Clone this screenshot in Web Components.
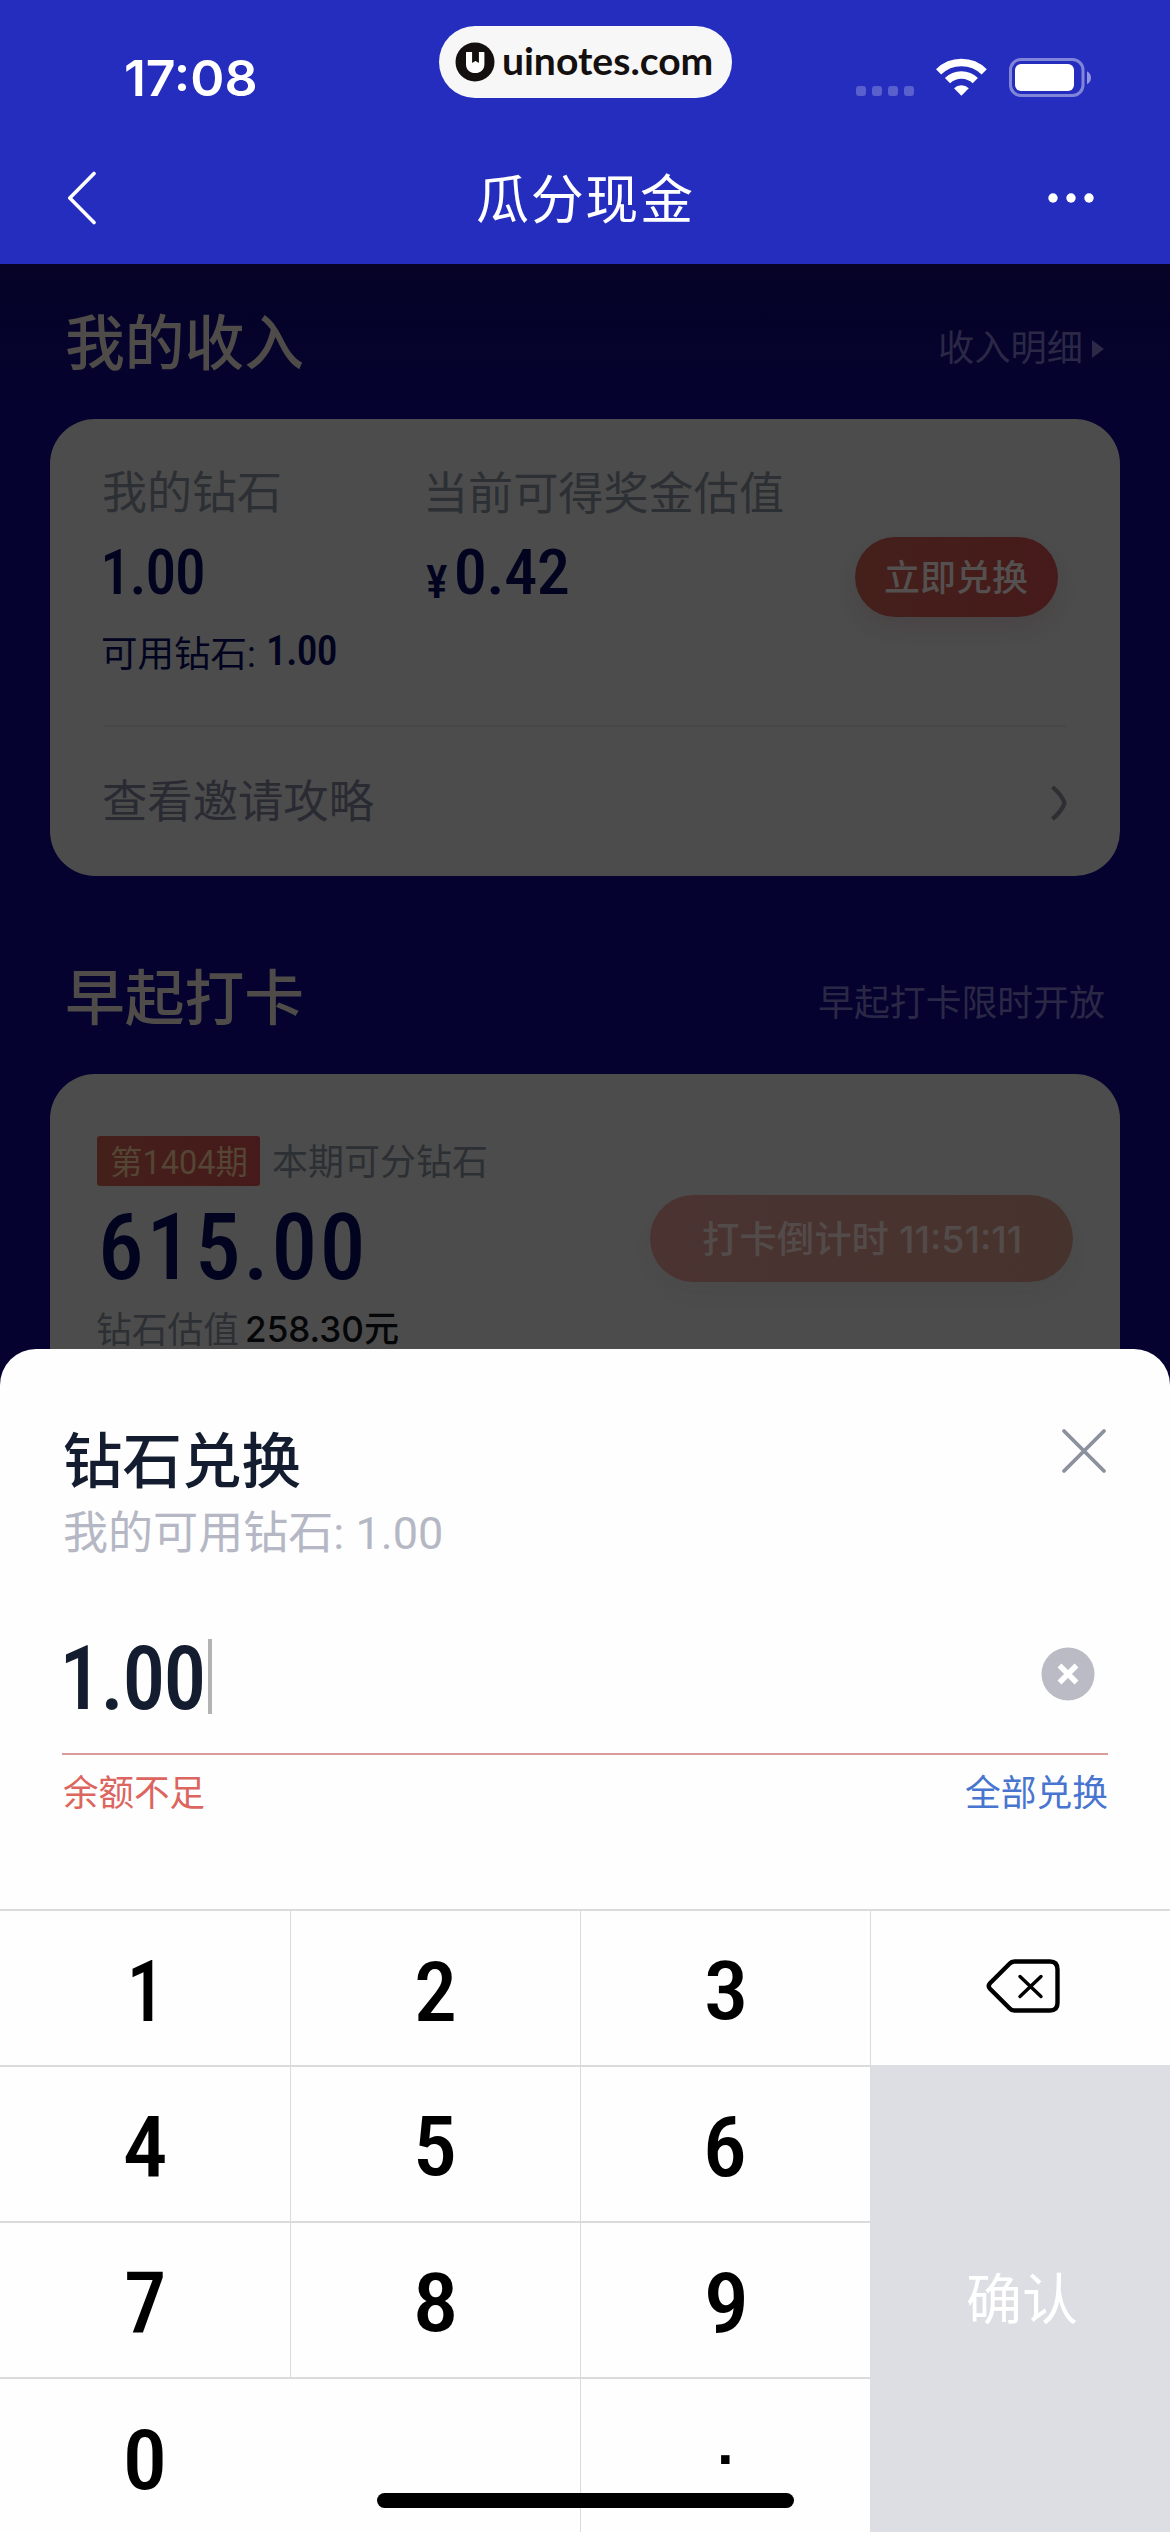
<!DOCTYPE html>
<html lang="zh-CN">
<head>
<meta charset="utf-8">
<title>瓜分现金</title>
<style>
html,body{margin:0;padding:0;background:#050230}
body{width:1170px;height:2532px;overflow:hidden;font-family:"Noto Sans CJK SC",sans-serif}
</style>
</head>
<body>
<cash-page></cash-page>
<script>
const FONTS = {
  cjk: '"Noto Sans CJK SC", sans-serif',
  mix: 'Roboto, "Noto Sans CJK SC", sans-serif',
  sf: 'Inter, "Noto Sans CJK SC", sans-serif',
  din: '"Roboto Condensed", Roboto, sans-serif',
  arial: '"Liberation Sans", sans-serif',
  logo: 'Lato, sans-serif'
};
const pen = document.createElement('canvas').getContext('2d');

/* A line of text whose box is its inked area: w and h are the ink size in px. */
class InkText extends HTMLElement {
  connectedCallback() {
    const n = (k, d) => this.hasAttribute(k) ? parseFloat(this.getAttribute(k)) : d;
    const text = this.getAttribute('t');
    const w = n('w'), h = n('h'), weight = n('weight', 400), ls = n('ls', 0);
    const family = FONTS[this.getAttribute('face') || 'cjk'];
    const measure = s => {
      pen.font = `${weight} ${s}px ${family}`;
      pen.letterSpacing = (ls * s) + 'px';
      return pen.measureText(text);
    };
    let size = n('size', 0);
    if (!size) {
      const m = measure(100);
      size = h * 100 / (m.actualBoundingBoxAscent + m.actualBoundingBoxDescent);
    }
    const m = measure(size);
    const up = m.actualBoundingBoxAscent, down = m.actualBoundingBoxDescent;
    const A = Math.round(m.fontBoundingBoxAscent), D = Math.round(m.fontBoundingBoxDescent);
    const base = (h - A - D) / 2 + A;
    const sx = w / (m.actualBoundingBoxLeft + m.actualBoundingBoxRight);
    const dy = (h - up - down) / 2 + up - base;
    const dx = m.actualBoundingBoxLeft * sx;
    const root = this.attachShadow({mode: 'open'});
    root.innerHTML = `<style>
      :host{display:block;flex:none;width:${w}px;height:${h}px}
      span{display:block;width:max-content;white-space:pre;font:${weight} ${size}px/${h}px ${family.replace(/"/g, "'")};
        letter-spacing:${ls}em;transform-origin:0 0;transform:translate(${dx}px,${dy}px) scaleX(${sx})}
    </style><span></span>`;
    root.querySelector('span').textContent = text;
  }
}
customElements.define('ink-text', InkText);

function component(name, html) {
  const tpl = document.createElement('template');
  tpl.innerHTML = html;
  customElements.define(name, class extends HTMLElement {
    constructor() {
      super();
      this.attachShadow({mode: 'open'}).appendChild(tpl.content.cloneNode(true));
    }
  });
}

component('status-bar', `
<style>
:host{display:flex;height:134px;align-items:flex-start;color:#fff}
.pill{display:flex;width:293px;height:72px;margin:26px 0 0 183px;border-radius:36px;background:#f7f7f7;color:#14100f}
svg{display:block;flex:none}
</style>
<ink-text t="17:08" face="sf" weight="600" w="130" h="37" style="margin:60px 0 0 126px"></ink-text>
<div class="pill">
  <svg width="40" height="40" viewBox="0 0 40 40" style="margin:16px 0 0 16px"><circle cx="20" cy="20" r="19.5" fill="#14100f"/><path fill="#fff" d="M11.3 10h6v10.8l3.2-2 3.2 2V10h2.5v0h2.2c.7 0 1 .4 1 1v11.5c0 5-4 8.6-9.2 8.6s-9.2-3.600-9.200-8.600V11c0-.6.3-1 .3-1z"/><path fill="#14100f" d="M17.300 10h6.400v10.800l-3.200-2-3.200 2z"/></svg>
  <ink-text t="uinotes.com" face="logo" weight="700" w="208" h="28" style="margin:21px 0 0 9px"></ink-text>
</div>
<svg width="240" height="42" viewBox="0 0 240 42" style="margin:57px 0 0 122px">
  <g fill="#fff" fill-opacity=".24"><rect x="2" y="29" width="10" height="10" rx="3"/><rect x="18" y="29" width="10" height="10" rx="3"/><rect x="34" y="29" width="10" height="10" rx="3"/><rect x="50" y="29" width="10" height="10" rx="3"/></g>
  <g fill="none" stroke="#fff" stroke-width="7.400"><path d="M84.600 14.800a32.500 32.500 0 0 1 45.600 0"/><path d="M93.500 23.700a19.800 19.800 0 0 1 27.800 0"/></g>
  <path fill="#fff" d="M107.400 38.800l-7.400-7.600a10.700 10.700 0 0 1 14.800 0z"/>
  <rect x="156.500" y="2.500" width="72.500" height="36" rx="10.500" fill="none" stroke="#fff" stroke-opacity=".42" stroke-width="3"/>
  <rect x="161" y="7" width="59" height="27" rx="6" fill="#fff"/>
  <path d="M233 14.300c5.300 2.400 5.300 10.600 0 13z" fill="#fff" fill-opacity=".5"/>
</svg>`);

component('nav-bar', `
<style>
:host{display:flex;height:130px;color:#fff}
svg{display:block;flex:none}
</style>
<svg width="30" height="56" viewBox="0 0 30 56" style="margin:36px 0 0 66px"><path d="M28 3.500L3.800 28 28 52.500" fill="none" stroke="#fff" stroke-width="3.600" stroke-linejoin="round" stroke-linecap="round"/></svg>
<ink-text t="瓜分现金" size="53" ls=".03" w="215" h="50" style="margin:39px 0 0 381px"></ink-text>
<svg width="50" height="12" viewBox="0 0 50 12" style="margin:58px 0 0 354px"><g fill="#fff"><circle cx="7" cy="6" r="4.700"/><circle cx="25" cy="6" r="4.700"/><circle cx="43" cy="6" r="4.700"/></g></svg>`);

component('section-head', `
<style>
:host{display:flex;justify-content:space-between;align-items:flex-start;box-sizing:border-box;padding:0 66px 0 67px;color:#4e4b49}
::slotted([slot=more]){color:#2b2846}
</style>
<slot></slot><slot name="more"></slot>`);

component('panel-card', `
<style>
:host{display:flow-root;width:1070px;margin:0 50px;box-sizing:border-box;background:#4c4c4c;border-radius:45px;color:#2c2f33}
</style><slot></slot>`);

component('pill-button', `
<style>
:host{display:flex;justify-content:center;align-items:center;box-sizing:border-box;border-radius:50px;color:#545050;
background:linear-gradient(90deg,#44201b,#461a1a);box-shadow:0 12px 18px rgba(70,40,45,.16)}
:host([off]){background:linear-gradient(90deg,#4a3331,#47332e);color:#534b49;box-shadow:0 12px 18px rgba(70,55,55,.06)}
</style><slot></slot>`);

component('income-card', `
<style>
:host{display:block}
panel-card{height:457px}
.row{display:flex;align-items:flex-start}
.navy{color:#01031f}
hr{border:0;height:2px;background:#474747;margin:55px 54px 0 53px}
svg{display:block}
</style>
<panel-card>
  <div class="row" style="padding:52px 0 0 53px">
    <ink-text t="我的钻石" size="45" w="177" h="42"></ink-text>
    <ink-text t="当前可得奖金估值" size="45" w="355" h="42" style="margin-left:148px"></ink-text>
  </div>
  <div class="row navy" style="padding:24px 0 0 54px;height:97px">
    <ink-text t="1.00" face="din" weight="500" ls="-.02" w="99" h="47" style="margin-top:11px"></ink-text>
    <ink-text t="¥" face="din" weight="500" w="21" h="33" style="margin:28px 0 0 223px"></ink-text>
    <ink-text t="0.42" face="din" weight="500" ls="-.01" w="111" h="47" style="margin:11px 0 0 10px"></ink-text>
    <pill-button style="width:203px;height:80px;margin-left:287px"><ink-text t="立即兑换" weight="500" size="36" w="143" h="34"></ink-text></pill-button>
  </div>
  <div class="row navy" style="padding:0 0 0 53px;height:36px">
    <ink-text t="可用钻石:" face="mix" size="36" w="151" h="34" style="margin-top:2px"></ink-text>
    <ink-text t="1.00" face="din" weight="500" ls="-.02" w="67" h="32" style="margin:0 0 0 15px"></ink-text>
  </div>
  <hr>
  <div class="row" style="padding:53px 51px 0 53px;justify-content:space-between;color:#2a2a33">
    <ink-text t="查看邀请攻略" size="45" w="271" h="42"></ink-text>
    <svg width="20" height="38" viewBox="0 0 20 38" style="margin-top:4px"><path d="M3.500 3Q13 11 15.500 19 13 27 3.500 35" fill="none" stroke="#2e2e33" stroke-width="4.200" stroke-linejoin="round"/></svg>
  </div>
</panel-card>`);

component('checkin-card', `
<style>
:host{display:block}
panel-card{height:275px;border-radius:45px 45px 0 0}
.cols{display:flex;align-items:flex-start;justify-content:space-between;padding:62px 47px 0 47px}
.row{display:flex;align-items:flex-start}
.tag{display:flex;justify-content:center;align-items:center;width:163px;height:50px;border-radius:3px;background:linear-gradient(90deg,#44201b,#461a1a);color:#544534}
</style>
<panel-card>
  <div class="cols">
    <div>
      <div class="row"><div class="tag"><ink-text t="第1404期" face="mix" size="33" w="135" h="31"></ink-text></div>
        <ink-text t="本期可分钻石" size="36" w="213" h="34" style="margin:8px 0 0 13px"></ink-text></div>
      <ink-text t="615.00" face="din" weight="500" ls=".03" w="258" h="69" style="margin:26px 0 0 6px;color:#01031f"></ink-text>
      <div class="row"><ink-text t="钻石估值" size="36" w="141" h="34" style="margin:31px 0 0 0"></ink-text>
        <ink-text t="258.30元" face="sf" weight="500" size="36" w="151" h="33" style="margin:32px 0 0 9px;color:#050608"></ink-text></div>
    </div>
    <pill-button off style="width:423px;height:87px;margin-top:59px"><ink-text t="打卡倒计时 11:51:11" face="sf" weight="500" size="37" w="317" h="36"></ink-text></pill-button>
  </div>
</panel-card>`);

component('exchange-form', `
<style>
:host{display:block;box-sizing:border-box;height:560px;padding:83px 62px 0 62px;background:#fefefe;border-radius:36px 36px 0 0;color:#141d2f}
.row{display:flex;justify-content:space-between;align-items:flex-start}
.field{height:108px;padding-left:3px;border-bottom:2px solid #d99c9a}
.caret{width:4px;height:75px;background:#b3b3b3;margin:-6px 0 0 5px}
.val{display:flex}
svg{display:block}
</style>
<div class="row">
  <ink-text t="钻石兑换" weight="500" size="60" w="236" h="56" style="margin-left:2px"></ink-text>
  <svg width="48" height="48" viewBox="0 0 48 48" style="margin-top:-5px"><path d="M4 4l40 40M44 4L4 44" stroke="#8c919e" stroke-width="3.800" stroke-linecap="round"/></svg>
</div>
<ink-text t="我的可用钻石: 1.00" face="mix" size="45" w="377" h="42" style="margin:23px 0 92px 2px;color:#b5b8c4"></ink-text>
<div class="row field">
  <div class="val"><ink-text t="1.00" face="din" weight="500" ls="-.02" w="138" h="66"></ink-text><div class="caret"></div></div>
  <svg width="54" height="54" viewBox="0 0 54 54" style="margin:2px 13px 0 0"><circle cx="27" cy="27" r="26.500" fill="#bbbbc5"/><path d="M18.500 18.500l17 17M35.500 18.500l-17 17" stroke="#fff" stroke-width="5.400"/></svg>
</div>
<div class="row" style="padding:21px 1px 0 1px">
  <ink-text t="余额不足" size="36" w="141" h="33" style="color:#dc6560"></ink-text>
  <ink-text t="全部兑换" size="36" w="142" h="33" style="color:#4875d0"></ink-text>
</div>`);

component('key-cell', `
<style>
:host{display:flex;justify-content:center;align-items:flex-start;box-sizing:border-box;border-top:2px solid #d9dbdc;border-right:1px solid #d9dbdc;padding-top:49px;background:#fefefe;color:#000}
:host([zero]){justify-content:flex-start;padding-left:127px;grid-column:span 2}
:host([dot]){padding-top:76px;border-right:0}
:host([last]){border-right:0}
</style><slot></slot>`);

component('num-keypad', `
<style>
:host{display:grid;grid-template-columns:291px 290px 290px 299px;grid-template-rows:156px 156px 156px 155px;background:#fefefe}
.ok{grid-column:4;grid-row:2/5;background:#dddee3;color:#fff;display:flex;justify-content:center;padding-top:207px;padding-left:2px}
svg{display:block}
</style>
<key-cell><ink-text t="1" face="din" weight="500" w="21" h="61" style="margin-right:5px"></ink-text></key-cell>
<key-cell><ink-text t="2" face="din" weight="500" w="37" h="61"></ink-text></key-cell>
<key-cell><ink-text t="3" face="din" weight="500" w="37" h="61"></ink-text></key-cell>
<key-cell last><svg width="76" height="56" viewBox="0 0 76 56" style="margin:-2px 0 0 6px"><path d="M28.500 3.500H64q7.500 0 7.500 8V45q0 7.500-7.500 7.500H28.500q-3 0-5-2.300L4 30.800q-2.500-2.800 0-5.600L23.500 5.800q2-2.300 5-2.300z" fill="none" stroke="#000" stroke-width="4.400"/><path d="M34 18.500l21 20M55 18.500l-21 20" stroke="#000" stroke-width="3.400" stroke-linecap="round"/></svg></key-cell>
<key-cell><ink-text t="4" face="din" weight="500" w="40" h="61"></ink-text></key-cell>
<key-cell><ink-text t="5" face="din" weight="500" w="37" h="61"></ink-text></key-cell>
<key-cell last style="border-right:1px solid #dddee3"><ink-text t="6" face="din" weight="500" w="37" h="61"></ink-text></key-cell>
<key-cell><ink-text t="7" face="din" weight="500" w="36" h="61"></ink-text></key-cell>
<key-cell><ink-text t="8" face="din" weight="500" w="37" h="61"></ink-text></key-cell>
<key-cell last style="border-right:1px solid #dddee3"><ink-text t="9" face="din" weight="500" w="37" h="61"></ink-text></key-cell>
<key-cell zero><ink-text t="0" face="din" weight="500" w="36" h="62"></ink-text></key-cell>
<key-cell dot style="border-right:1px solid #dddee3"><ink-text t="." face="arial" weight="700" w="9" h="9"></ink-text></key-cell>
<div class="ok"><ink-text t="确认" size="55" w="110" h="52"></ink-text></div>`);

component('cash-page', `
<style>
:host{display:block;position:relative;width:1170px;height:2532px;overflow:hidden}
header{background:#252dbe;height:264px}
main{height:1085px;overflow:hidden;background:linear-gradient(180deg,#060327,#050230 160px,#050230)}
.sheet{background:#050230}
.tri{width:0;height:0;border-left:12px solid #2b2946;border-top:9px solid transparent;border-bottom:9px solid transparent;margin:10px 0 0 11px}
.more{display:flex}
.home{position:absolute;left:377px;top:2493px;width:417px;height:15px;border-radius:8px;background:#000}
</style>
<header><status-bar></status-bar><nav-bar></nav-bar></header>
<main>
  <section-head style="height:155px;padding-top:50px">
    <ink-text t="我的收入" weight="500" size="60" w="236" h="56"></ink-text>
    <div slot="more" class="more" style="margin-top:16px"><ink-text t="收入明细" size="36" w="141" h="34"></ink-text><div class="tri"></div></div>
  </section-head>
  <income-card></income-card>
  <section-head style="height:198px;padding-top:94px">
    <ink-text t="早起打卡" weight="500" size="60" w="235" h="56"></ink-text>
    <ink-text slot="more" t="早起打卡限时开放" size="36" w="285" h="34" style="margin-top:15px"></ink-text>
  </section-head>
  <checkin-card></checkin-card>
</main>
<div class="sheet"><exchange-form></exchange-form><num-keypad></num-keypad></div>
<div class="home"></div>`);
</script>
</body>
</html>
